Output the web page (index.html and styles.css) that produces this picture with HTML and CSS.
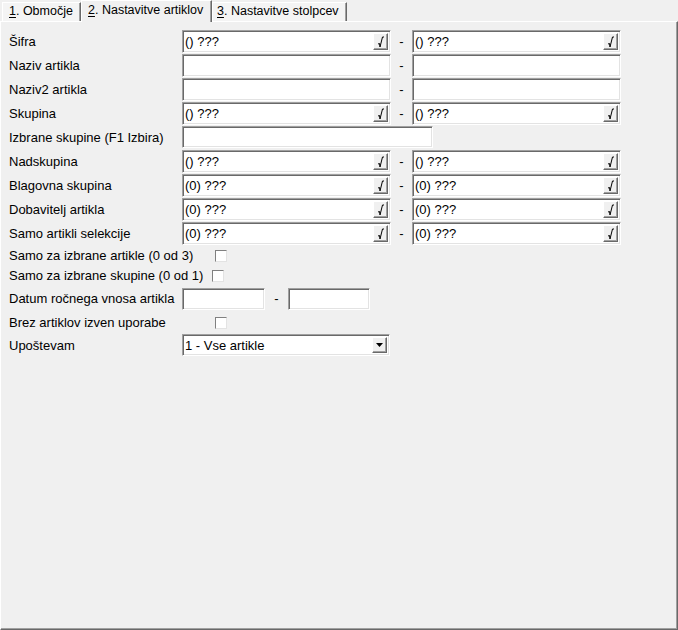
FILE: index.html
```html
<!DOCTYPE html>
<html lang="sl">
<head>
    <meta charset="UTF-8">
    <title>Nastavitve artiklov</title>
    <link rel="stylesheet" href="styles.css">
</head>
<body>
  <div class="tabs">
    <div class="tab tab-1"><u>1</u>. Območje</div>
    <div class="tab tab-2 active"><u>2</u>. Nastavitve artiklov</div>
    <div class="tab tab-3"><u>3</u>. Nastavitve stolpcev</div>
  </div>

  <div class="panel">
    <div class="row">
      <div class="label">Šifra</div>
      <div class="edit lookup"><span class="val">() ???</span><span class="pick"><svg width="9" height="13" viewBox="0 0 9 13"><path d="M2 9 L3.5 8.5 L4 12 L6.5 2 L8 2" fill="none" stroke="#000" stroke-width="1"/></svg></span></div>
      <div class="dash">-</div>
      <div class="edit lookup"><span class="val">() ???</span><span class="pick"><svg width="9" height="13" viewBox="0 0 9 13"><path d="M2 9 L3.5 8.5 L4 12 L6.5 2 L8 2" fill="none" stroke="#000" stroke-width="1"/></svg></span></div>
    </div>
    <div class="row">
      <div class="label">Naziv artikla</div>
      <div class="edit lookup"></div>
      <div class="dash">-</div>
      <div class="edit lookup"></div>
    </div>
    <div class="row">
      <div class="label">Naziv2 artikla</div>
      <div class="edit lookup"></div>
      <div class="dash">-</div>
      <div class="edit lookup"></div>
    </div>
    <div class="row">
      <div class="label">Skupina</div>
      <div class="edit lookup"><span class="val">() ???</span><span class="pick"><svg width="9" height="13" viewBox="0 0 9 13"><path d="M2 9 L3.5 8.5 L4 12 L6.5 2 L8 2" fill="none" stroke="#000" stroke-width="1"/></svg></span></div>
      <div class="dash">-</div>
      <div class="edit lookup"><span class="val">() ???</span><span class="pick"><svg width="9" height="13" viewBox="0 0 9 13"><path d="M2 9 L3.5 8.5 L4 12 L6.5 2 L8 2" fill="none" stroke="#000" stroke-width="1"/></svg></span></div>
    </div>
    <div class="row">
      <div class="label">Izbrane skupine (F1 Izbira)</div>
      <div class="edit wide"></div>
    </div>
    <div class="row">
      <div class="label">Nadskupina</div>
      <div class="edit lookup"><span class="val">() ???</span><span class="pick"><svg width="9" height="13" viewBox="0 0 9 13"><path d="M2 9 L3.5 8.5 L4 12 L6.5 2 L8 2" fill="none" stroke="#000" stroke-width="1"/></svg></span></div>
      <div class="dash">-</div>
      <div class="edit lookup"><span class="val">() ???</span><span class="pick"><svg width="9" height="13" viewBox="0 0 9 13"><path d="M2 9 L3.5 8.5 L4 12 L6.5 2 L8 2" fill="none" stroke="#000" stroke-width="1"/></svg></span></div>
    </div>
    <div class="row">
      <div class="label">Blagovna skupina</div>
      <div class="edit lookup"><span class="val">(0) ???</span><span class="pick"><svg width="9" height="13" viewBox="0 0 9 13"><path d="M2 9 L3.5 8.5 L4 12 L6.5 2 L8 2" fill="none" stroke="#000" stroke-width="1"/></svg></span></div>
      <div class="dash">-</div>
      <div class="edit lookup"><span class="val">(0) ???</span><span class="pick"><svg width="9" height="13" viewBox="0 0 9 13"><path d="M2 9 L3.5 8.5 L4 12 L6.5 2 L8 2" fill="none" stroke="#000" stroke-width="1"/></svg></span></div>
    </div>
    <div class="row">
      <div class="label">Dobavitelj artikla</div>
      <div class="edit lookup"><span class="val">(0) ???</span><span class="pick"><svg width="9" height="13" viewBox="0 0 9 13"><path d="M2 9 L3.5 8.5 L4 12 L6.5 2 L8 2" fill="none" stroke="#000" stroke-width="1"/></svg></span></div>
      <div class="dash">-</div>
      <div class="edit lookup"><span class="val">(0) ???</span><span class="pick"><svg width="9" height="13" viewBox="0 0 9 13"><path d="M2 9 L3.5 8.5 L4 12 L6.5 2 L8 2" fill="none" stroke="#000" stroke-width="1"/></svg></span></div>
    </div>
    <div class="row">
      <div class="label">Samo artikli selekcije</div>
      <div class="edit lookup"><span class="val">(0) ???</span><span class="pick"><svg width="9" height="13" viewBox="0 0 9 13"><path d="M2 9 L3.5 8.5 L4 12 L6.5 2 L8 2" fill="none" stroke="#000" stroke-width="1"/></svg></span></div>
      <div class="dash">-</div>
      <div class="edit lookup"><span class="val">(0) ???</span><span class="pick"><svg width="9" height="13" viewBox="0 0 9 13"><path d="M2 9 L3.5 8.5 L4 12 L6.5 2 L8 2" fill="none" stroke="#000" stroke-width="1"/></svg></span></div>
    </div>

    <div class="row row-chk1">
      <div class="label">Samo za izbrane artikle (0 od 3)</div>
      <div class="check"></div>
    </div>
    <div class="row row-chk2">
      <div class="label">Samo za izbrane skupine (0 od 1)</div>
      <div class="check shift"></div>
    </div>
    <div class="row row-date">
      <div class="label">Datum ročnega vnosa artikla</div>
      <div class="edit date-from"></div>
      <div class="dash date-dash">-</div>
      <div class="edit date-to"></div>
    </div>
    <div class="row row-chk3">
      <div class="label">Brez artiklov izven uporabe</div>
      <div class="check"></div>
    </div>
    <div class="row row-combo">
      <div class="label">Upoštevam</div>
      <div class="edit combo"><span class="val">1 - Vse artikle</span><span class="pick"><svg width="7" height="4" viewBox="0 0 7 4"><path d="M0 0 H7 L3.5 4 Z" fill="#000"/></svg></span></div>
    </div>
  </div>
</body>
</html>
```

FILE: styles.css
```css
body{
    margin: 0;
    width: 678px;
    height: 630px;
    overflow: hidden;
    background-color: #f0f0f0;
    font-family: "Liberation Sans", Arial, sans-serif;
    font-size: 13px;
    color: #000;
}

/* tab strip */
.tabs{
    display: flex;
    align-items: flex-end;
    height: 21px;
    padding-left: 2px;
    position: relative;
    z-index: 1;
}

.tab{
    box-sizing: border-box;
    height: 19px;
    padding: 1px 0 0 6px;
    background-color: #f4f4f4;
    border-top: 1px solid #fff;
    border-left: 1px solid #fff;
    border-right: 1px solid #696969;
    box-shadow: inset -1px 0 #a0a0a0;
    font-size: 12.5px;
    white-space: nowrap;
}
.tab u{
    text-decoration-thickness: 1px;
    text-underline-offset: 2px;
}
.tab-1{ width: 79px; }
.tab-2{ width: 131px; }
.tab-3{ width: 135px; padding-left: 4px; }

.tab.active{
    height: 22px;
    margin-bottom: -1px;
    padding-top: 2px;
    background-color: #f0f0f0;
}

/* page body below the tabs */
.panel{
    box-sizing: border-box;
    height: 609px;
    padding: 7px 0 0 8px;
    border-top: 1px solid #fff;
    border-left: 1px solid #fff;
    border-right: 1px solid #696969;
    border-bottom: 1px solid #696969;
    box-shadow: inset -1px -1px #a0a0a0;
}

.row{
    display: flex;
    align-items: center;
    height: 24px;
}
.row-chk1{ height: 21px; }
.row-chk2{ height: 19px; }
.row-date{ height: 27px; }
.row-chk3{ height: 21px; }
.row-combo{ height: 24px; }

.label{
    width: 173px;
    flex: none;
    white-space: nowrap;
}

/* sunken edit box */
.edit{
    box-sizing: border-box;
    display: flex;
    align-items: center;
    height: 22px;
    background-color: #fff;
    border: 1px solid;
    border-color: #a0a0a0 #fff #fff #a0a0a0;
    box-shadow: inset 1px 1px #696969, inset -1px -1px #e3e3e3;
    padding: 2px;
}
.lookup{
    width: 209px;
    height: 23px;
}
.wide{ width: 251px; }
.date-from{ width: 83px; }
.date-to{ width: 82px; }
.combo{ width: 208px; }

.val{
    flex: 1;
    white-space: nowrap;
}

/* small raised button on the right of a field */
.pick{
    box-sizing: border-box;
    display: flex;
    align-items: center;
    justify-content: center;
    width: 15px;
    height: 100%;
    background-color: #f0f0f0;
    border: 1px solid;
    border-color: #fff #696969 #696969 #fff;
    box-shadow: inset -1px -1px #a0a0a0;
}

.dash{
    width: 21px;
    text-align: center;
}
.date-dash{ width: 23px; }

.check{
    box-sizing: border-box;
    width: 12px;
    height: 12px;
    margin-left: 33px;
    background-color: #fff;
    border: 1px solid;
    border-color: #808080 #e3e3e3 #e3e3e3 #808080;
}
.check.shift{ margin-left: 30px; }
```
